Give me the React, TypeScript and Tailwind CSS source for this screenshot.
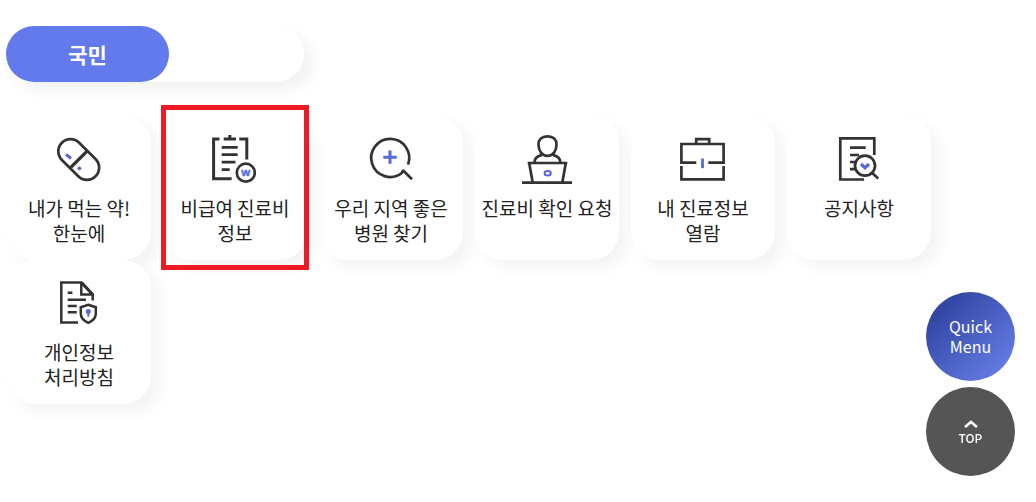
import type { ReactNode } from "react";
import { clsx } from "clsx";

const ACCENT = "#5468d8";

function Icon({ children, viewBox = "0 0 50 50" }: { children: ReactNode; viewBox?: string }) {
  return (
    <svg viewBox={viewBox} fill="none" stroke="#333333" strokeWidth="2.7" className="w-[50px] h-[50px]" aria-hidden="true">
      {children}
    </svg>
  );
}

function PillIcon() {
  return (
    <Icon viewBox="1 0 50 50">
      <g transform="rotate(45 25.7 25.5)">
        <rect x="1.9" y="13.3" width="47.6" height="24.4" rx="12.2" />
        <path d="M25.7 13.3v24.4" strokeWidth="3.4" />
      </g>
      <path d="M13 20.3l5 4.2" stroke={ACCENT} strokeWidth="3" />
      <circle cx="26.4" cy="34.3" r="1.9" fill={ACCENT} stroke="none" />
    </Icon>
  );
}

function ClipboardIcon() {
  return (
    <Icon viewBox="1 0 50 50">
      <path d="M10.5 5H4.6v39.7h18M14.7 5H27M20.8 1v4M30.3 5h7.5v20.5" strokeWidth="3" />
      <path d="M12.7 13.4h16M12.7 20.7h16M12.7 28.2h13.8M12.7 35.6h8" />
      <circle cx="36.8" cy="38.7" r="9" />
      <text x="36.8" y="42.4" textAnchor="middle" fontSize="9.5" fontWeight="700" fontFamily="Liberation Sans, sans-serif" fill={ACCENT} stroke={ACCENT} strokeWidth="0.5">W</text>
    </Icon>
  );
}

function SearchIcon() {
  return (
    <Icon>
      <path d="M42 30.6A19 19 0 1 0 35.8 39L37 36.300L46 45.300" strokeLinejoin="bevel" />
      <path d="M17.3 23.2h13.4M24 16.4v13.4" stroke={ACCENT} strokeWidth="3" />
    </Icon>
  );
}

function LaptopIcon() {
  return (
    <Icon>
      <path d="M25.3 2.3h.5c5.5 0 8.700 3.200 8.700 8.200 0 6.500-3.400 11.300-9 11.300s-9-4.800-9-11.300c0-5 3.200-8.200 8.800-8.200z" />
      <path d="M12.400 28.500c.3-4.300 2.800-6.600 7.500-7.300M38.400 28.500c-.3-4.300-2.800-6.600-7.500-7.300" />
      <path d="M5.700 29h39.600M7.200 29l3.300 18.500M43.800 29l-3.300 18.500M0 48.700h50" />
      <ellipse cx="25.700" cy="39.200" rx="3.100" ry="2.300" stroke={ACCENT} strokeWidth="2" />
    </Icon>
  );
}

function BriefcaseIcon() {
  return (
    <Icon>
      <path d="M18.300 28.600H3.400V10h42.200v18.600H30.300M3.400 32v13.400h42.200V32M18.200 9V5.200h13V9" />
      <path d="M24.500 24.500v9.700" stroke={ACCENT} strokeWidth="2.800" />
    </Icon>
  );
}

function NoticeIcon() {
  return (
    <Icon>
      <path d="M40.300 21V4.300h-34v41.200H30" />
      <path d="M16 13.600h15.700M16 21h9M16 28h5M16 35.200h6" />
      <circle cx="31" cy="31.700" r="10" fill="#ffffff" />
      <path d="M38.500 39.300l5.700 5.300" />
      <path d="M27 30l4 3.800L35 30" stroke={ACCENT} strokeWidth="3.200" />
    </Icon>
  );
}

function PrivacyIcon() {
  return (
    <Icon viewBox="1 0 50 50">
      <g strokeWidth="2.500">
        <path d="M39.700 22.500v-6L28.500 4.500H8.300v40.100H25M28.300 4.500v12.100h11.400" />
        <path d="M29 5l11 12" strokeWidth="3" />
        <path d="M14.700 14.700h4.700M14.700 21.700h18.200M14.700 28h9M14.700 34.300h9" />
        <path d="M35.300 26.700l7.500 2.500v6.500c0 4.300-3.300 7.200-7.500 9.200-4.200-2-7.500-4.900-7.500-9.200v-6.500z" fill="#ffffff" />
      </g>
      <circle cx="35.300" cy="33.500" r="2.500" fill={ACCENT} stroke="none" />
      <path d="M35.300 33.500v5.300" stroke={ACCENT} strokeWidth="2" />
    </Icon>
  );
}

const menus: { lines: string[]; icon: ReactNode; marked?: boolean }[] = [
  { lines: ["내가 먹는 약!", "한눈에"], icon: <PillIcon /> },
  { lines: ["비급여 진료비", "정보"], icon: <ClipboardIcon />, marked: true },
  { lines: ["우리 지역 좋은", "병원 찾기"], icon: <SearchIcon /> },
  { lines: ["진료비 확인 요청"], icon: <LaptopIcon /> },
  { lines: ["내 진료정보", "열람"], icon: <BriefcaseIcon /> },
  { lines: ["공지사항"], icon: <NoticeIcon /> },
  { lines: ["개인정보", "처리방침"], icon: <PrivacyIcon /> },
];

export default function App() {
  return (
    <div className="min-h-screen bg-white pt-[26px] pb-24 font-['Noto_Sans_CJK_KR',sans-serif] text-[#222222]">
      <div className="ml-1.5 w-[298px] rounded-full bg-white shadow-[8px_8px_16px_rgba(0,0,0,0.06)]">
        <button type="button" className="h-14 w-[163px] rounded-full bg-[#637aec] pt-0.5 text-[21px] font-bold text-white">
          국민
        </button>
      </div>

      <ul className="mt-[34px] flex flex-wrap gap-x-3 pl-[7px]">
        {menus.map((menu) => (
          <li key={menu.lines[0]} className={clsx("w-36", menu.marked && "relative")}>
            <a
              href="#"
              className="flex h-36 flex-col items-center rounded-[28px] bg-white pt-[18px] shadow-[8px_8px_16px_rgba(0,0,0,0.05)]"
            >
              {menu.icon}
              <span className="mt-[11px] text-center text-[19px] leading-[25px] whitespace-nowrap">
                {menu.lines.map((line) => (
                  <span key={line} className="block">{line}</span>
                ))}
              </span>
            </a>
            {menu.marked && (
              <span className="pointer-events-none absolute -inset-x-0.5 -top-[11px] -bottom-2.5 border-5 border-[#ed1c24]" />
            )}
          </li>
        ))}
      </ul>

      <div className="fixed right-[21px] bottom-[26px] flex flex-col gap-1.5 text-white">
        <button
          type="button"
          className="size-[89px] rounded-full bg-linear-to-br from-[#263a94] to-[#7085f0] pb-0.5 text-base leading-5"
        >
          <span className="block">Quick</span>
          <span className="block">Menu</span>
        </button>
        <button
          type="button"
          className="flex size-[89px] flex-col items-center justify-center rounded-full bg-[#555555] pt-1 text-xs leading-5 font-medium"
        >
          <svg viewBox="0 0 14 8" className="h-2 w-3.5" fill="none" stroke="currentColor" strokeWidth="2.6" aria-hidden="true">
            <path d="M1 7l6-5L13 7" />
          </svg>
          TOP
        </button>
      </div>
    </div>
  );
}
